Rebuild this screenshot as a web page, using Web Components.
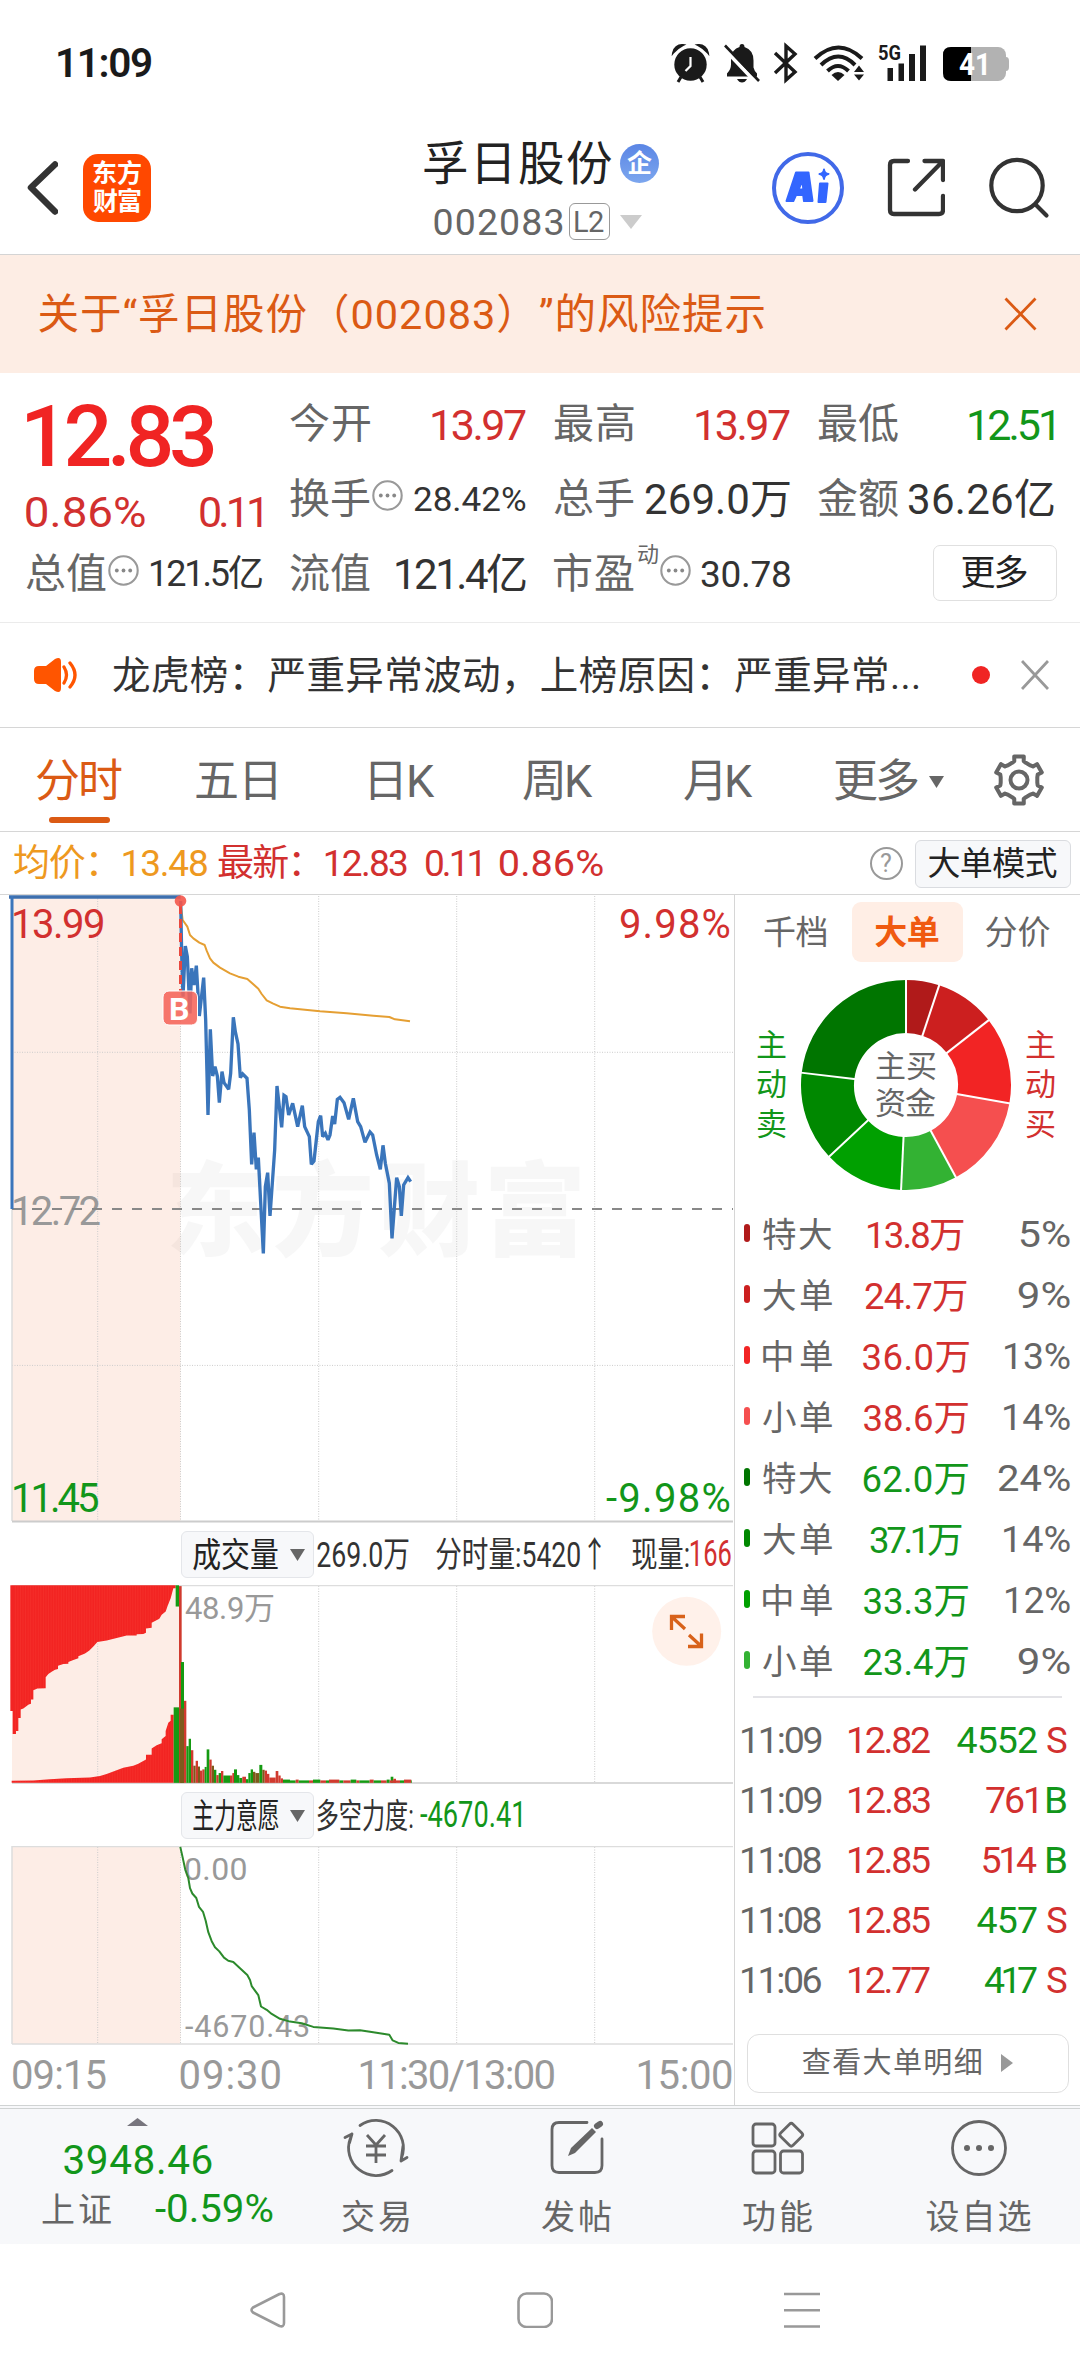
<!DOCTYPE html>
<html lang="zh-CN">
<head>
<meta charset="utf-8">
<title>孚日股份 002083</title>
<style>
html,body{margin:0;padding:0;background:#fff}
body{width:1080px;height:2376px;overflow:hidden;font-family:Roboto,"Noto Sans CJK SC",sans-serif}
</style>
</head>
<body>
<stock-app></stock-app>
<script>
const FONT='Roboto,"Noto Sans CJK SC",sans-serif';
const ctx=document.createElement('canvas').getContext('2d');
// Measures the inked extent of a string so that labels can be set to an exact width.
function ink(str,size,weight){
  ctx.font=`${weight} ${size}px ${FONT}`;
  const m=ctx.measureText(str);
  return {left:m.actualBoundingBoxLeft,width:m.actualBoundingBoxLeft+m.actualBoundingBoxRight};
}
const BASE=`*{box-sizing:border-box}svg{display:block;flex:none}.row{display:flex;align-items:center}.col{display:flex;flex-direction:column}`;
function define(name,css,html,after){
  const tpl=document.createElement('template');
  tpl.innerHTML=`<style>${BASE}${css}</style>${html}`;
  customElements.define(name,class extends HTMLElement{
    connectedCallback(){
      if(this.shadowRoot)return;
      this.attachShadow({mode:'open'}).append(tpl.content.cloneNode(true));
      if(after)after(this,this.shadowRoot);
    }
  });
}
// fit-text: s = font size, w = inked width, c = colour, b = weight, q = scale instead of tracking
customElements.define('fit-text',class extends HTMLElement{
  connectedCallback(){
    if(this.shadowRoot)return;
    const a=n=>this.getAttribute(n);
    const s=+a('s'),b=a('b')||400,str=this.textContent,k=ink(str,s,b),w=a('w')?+a('w'):k.width,n=[...str].length;
    let fit='';
    if(this.hasAttribute('q'))fit=`transform:scaleX(${w/k.width});transform-origin:${-k.left}px 0;`;
    else if(n>1)fit=`letter-spacing:${(w-k.width)/(n-1)}px;`;
    this.attachShadow({mode:'open'}).innerHTML=`<style>
      :host{display:flex;flex:none;width:${w}px;height:${.72*s}px;${a('c')?`color:${a('c')};`:''}font:${b} ${s}px ${FONT};line-height:${.72*s}px}
      span{display:block;white-space:nowrap;text-spacing-trim:space-all;margin:${.018*s}px 0 0 ${k.left}px;${fit}}</style><span><slot></slot></span>`;
  }
});
const T=(s,w,c,t,x='')=>`<fit-text s="${s}" w="${w}" c="${c}" ${x}>${t}</fit-text>`;
// Text label placed on a chart canvas by its inked left edge and baseline.
function label(x,y,w,s,c,t,b=400){
  const k=ink(t,s,b),n=[...t].length;
  return `<text x="${x+k.left}" y="${y}" fill="${c}" font-size="${s}" font-weight="${b}" style="letter-spacing:${n>1?(w-k.width)/(n-1):0}px">${t}</text>`;
}
const RED='#d2302f',GREEN='#12961a',ORANGE='#db5a14';

define('status-bar',`:host{display:flex;height:125px;padding:0 65px 0 58px;justify-content:space-between;align-items:center}`,
`${T(40.5,93,'#1a1a1a','11:09','b="600"')}
<svg width="345" height="45" viewBox="670 40 345 45" fill="#1a1a1a" stroke="none" font-family="Roboto">
 <circle cx="690.5" cy="64.5" r="16.2"/><path d="M673 53a9 9 0 0 1 10-8q-6 3-10 8zM708 53a9 9 0 0 0-10-8q6 3 10 8z" stroke="#1a1a1a" stroke-width="2"/><path d="M681 77l-3 5M700 77l3 5" stroke="#1a1a1a" stroke-width="3"/><path d="M690.500 57v9l-5 5" stroke="#fff" stroke-width="2.200" fill="none"/>
 <path d="M742 44q2.500 0 2.500 3q9 3 9 13.500v7q1 4 3.500 6v3h-30v-3q4-4 4-9v-7q1-8 8.500-10.500q0-3 2.500-3z"/><path d="M737 79h10q-2 3.500-5 3.500t-5-3.500z"/><path d="M722 46.500l35 37" stroke="#fff" stroke-width="4"/><path d="M725 45.500l34 35.500" stroke="#1a1a1a" stroke-width="2.600"/>
 <path d="M775 53l20 19-9 8V46l9 8-20 19" fill="none" stroke="#1a1a1a" stroke-width="3.400"/>
 <g fill="none" stroke="#1a1a1a" stroke-width="4"><path d="M815 58.500Q838.500 36.500 862 58.500"/><path d="M821 65Q838.500 48 855 65"/><path d="M827.500 71Q838 61 848.500 71"/></g><path d="M831.500 75q6.500-6 13 0l-6.500 6z"/><path d="M854 72l5-6.500 5 6.500zM854 74.500l5 6 5-6z"/>
 <text x="878" y="60" font-size="20" font-weight="700" textLength="23" lengthAdjust="spacingAndGlyphs">5G</text>
 <path d="M887.500 68h5.500v13h-5.500zM898.500 63.500h5.500V81h-5.500zM909 54h6v27h-6zM920 45.500h6V81h-6z"/>
 <rect x="943" y="47" width="63" height="34" rx="8" fill="#b2b2b2"/><path d="M1004 57h2q3 0 3 4v6q0 4-3 4h-2z" fill="#b2b2b2"/><path d="M951 47h20v34h-20q-8 0-8-8V55q0-8 8-8z" fill="#000"/>
 <text x="959" y="75" font-size="31" font-weight="700" fill="#fff" textLength="32" lengthAdjust="spacingAndGlyphs">41</text>
</svg>`);

define('app-header',`:host{display:flex;height:130px;border-bottom:1.500px solid #d4d4d4;padding:0 30px 0 27px;align-items:flex-start}
.left{gap:25px;margin-top:28.500px}.logo{width:68px;height:68px;border-radius:15px;background:#ff4800;display:flex;flex-direction:column;align-items:center;justify-content:center;gap:10.500px}
.mid{margin:22.500px 0 0 273px;align-items:flex-start}.t{gap:8px;height:32px}.badge{width:39px;height:39px;border-radius:50%;background:linear-gradient(#5b86e5,#7ca6ee);display:flex;align-items:center;justify-content:center}
.s{height:37px;margin:23.500px 0 0 10.500px}.l2{width:41px;height:37px;border:1.500px solid #999;border-radius:6px;margin:0 10px 0 6.500px;display:flex;align-items:center;justify-content:center}
.right{gap:43px;margin:26.500px 0 0 auto}`,
`<div class="row left"><svg width="31" height="56" viewBox="27 159 31 56"><path d="M55 164L31 187l24 24" transform="translate(0 -.5)" fill="none" stroke="#333" stroke-width="6.500" stroke-linecap="round" stroke-linejoin="round"/></svg>
<div class="logo">${T(25,48,'#fff','东方','b="700"')}${T(25,48,'#fff','财富','b="700"')}</div></div>
<div class="col mid"><div class="row t">${T(46.5,188,'#222','孚日股份')}<div class="badge">${T(25,25,'#fff','企','b="700"')}</div></div>
<div class="row s">${T(37.5,128,'#666','002083')}<div class="l2">${T(29,29,'#666','L2')}</div><svg width="22" height="14"><path d="M0 0h22L11 14z" fill="#ccc"/></svg></div></div>
<div class="row right"><svg width="72" height="72" viewBox="772 151.500 72 72"><circle cx="808" cy="187.500" r="34" fill="none" stroke="#4169e8" stroke-width="4"/><g fill="#3366ff" stroke="#3366ff" stroke-width="2" stroke-linejoin="round"><path fill-rule="evenodd" d="M796 172h12.500l4 28.500h-8.500l-.8-6h-7.200l-2.700 6h-6.800zM802.500 180l-4 9h4.800z"/><path d="M820 183h7.500l-2 18.500h-7z"/><path d="M824 169q.5 4 4.500 4.500-4 .5-4.500 5-.5-4.500-4.500-5 4-.5 4.500-4.500z"/></g></svg>
<svg width="58" height="60" viewBox="887 157.500 58 60" fill="none" stroke="#333" stroke-width="4.300" stroke-linecap="round" stroke-linejoin="round"><path d="M908 160.500h-14q-4 0-4 4v45q0 4 4 4h45q4 0 4-4v-14M924.500 160.500H943v19M942 161.500L915 189"/></svg>
<svg width="62" height="62" viewBox="990 156 62 62" fill="none" stroke="#333" stroke-width="4.200" stroke-linecap="round"><circle cx="1019" cy="184.500" r="25.700"/><path d="M1038 204l10.500 10.500"/></svg></div>`);

define('risk-banner',`:host{display:flex;height:118px;background:#fdede4;align-items:center;justify-content:space-between;padding:0 43px 0 38.500px}`,
`${T(41.5,726,ORANGE,'关于“孚日股份（002083）”的风险提示')}<svg width="34" height="34" viewBox="0 0 34 34"><path d="M2.500 1.500l30 31M32.500 1.500l-30 31" stroke="${ORANGE}" stroke-width="2.800"/></svg>`);

define('more-dot',`:host{display:block;flex:none;margin-bottom:8px}`,`<svg width="31" height="31" viewBox="-15.500 -15.500 31 31"><circle r="14.200" fill="none" stroke="#999" stroke-width="2.100"/><g fill="#888"><circle cx="-6.700" r="1.900"/><circle r="1.900"/><circle cx="6.700" r="1.900"/></g></svg>`);

define('quote-panel',`:host{display:grid;height:250px;border-bottom:1.500px solid #ebebeb;padding:14px 26px 0;grid-template-columns:repeat(4,236px);gap:28px}
.c>div{height:75px;display:flex;align-items:center;justify-content:space-between}.c>.big{height:100px;padding:0 0 4px 1px}.c>.sub{height:50px}.l{display:flex;align-items:center;gap:2px}
.btn{width:124px;height:56px;border:1.500px solid #e0e0e0;border-radius:7px;display:flex;align-items:center;justify-content:center;margin:-4px -2.500px 0 0}`,
`<div class="c"><div class="big">${T(86,187,'#f02423','12.83','b="500"')}</div><div class="sub">${T(43,119,RED,'0.86%','q')}${T(43,62,RED,'0.11')}</div><div><span class="l">${T(41,80,'#666','总值')}<more-dot></more-dot></span>${T(36,111,'#333','121.5亿')}</div></div>
<div class="c"><div>${T(41,80,'#666','今开')}${T(43,94,RED,'13.97')}</div><div><span class="l">${T(41,80,'#666','换手')}<more-dot></more-dot></span>${T(33.5,112,'#333','28.42%','q')}</div><div>${T(41,80,'#666','流值')}${T(42,130,'#333','121.4亿')}</div></div>
<div class="c"><div>${T(41,80,'#666','最高')}${T(43,94,RED,'13.97')}</div><div>${T(41,80,'#666','总手')}${T(42,145,'#333','269.0万')}</div><div><span class="l">${T(41,80,'#666','市盈')}<span style="margin:-40px 0 0 2px">${T(22,20,'#666','动')}</span><more-dot></more-dot></span>${T(37,89,'#333','30.78')}</div></div>
<div class="c"><div>${T(41,80,'#666','最低')}${T(43,85,GREEN,'12.51')}</div><div>${T(41,80,'#666','金额')}${T(42,146,'#333','36.26亿')}</div><div style="justify-content:flex-end"><div class="btn">${T(35,66,'#222','更多')}</div></div></div>`);

define('news-strip',`:host{display:flex;height:105px;border-bottom:1.500px solid #d6d6d6;padding:0 31px 0 33px;align-items:center}.dot{width:18px;height:18px;border-radius:50%;background:#f02423;margin:0 31px 0 53px}`,
`<svg width="46" height="38" viewBox="33 655 46 38"><path d="M39 665h7l9-7q6-3 6 3v26q0 6-6 3l-9-7h-7q-5 0-5-5v-8q0-5 5-5z" fill="#ff5500"/><path d="M64 666q5 8 0 16M70 662q10 12 0 24" fill="none" stroke="#ff5500" stroke-width="3.300" stroke-linecap="round"/></svg>
<span style="width:34px"></span>${T(38.5,806,'#333','龙虎榜：严重异常波动，上榜原因：严重异常...')}<div class="dot"></div><svg width="28" height="30"><path d="M1 1l26 28M27 1L1 29" stroke="#999" stroke-width="2.800"/></svg>`);

define('period-tabs',`:host{display:flex;height:104px;border-bottom:1.500px solid #d6d6d6;align-items:flex-start;padding:18px 35px 0 36px}
div{display:flex;align-items:center;height:71px}.on{flex-direction:column;height:77px;justify-content:space-between;padding-top:19.500px}.on i{width:61px;height:6px;border-radius:3px;background:${ORANGE}}`,
`<div class="on">${T(45,86,ORANGE,'分时')}<i></i></div><div style="margin-left:74px">${T(45,80,'#666','五日')}</div><div style="margin-left:94px">${T(45,65,'#666','日K')}</div><div style="margin-left:88px">${T(45,70,'#666','周K')}</div><div style="margin-left:91px">${T(45,69,'#666','月K')}</div><div style="margin-left:82px">${T(45,83,'#666','更多')}<svg width="15" height="12" style="margin-left:11px"><path d="M0 0h15L7.500 12z" fill="#666"/></svg></div><div style="margin-left:48px;height:68px"><svg id="gear" width="54" height="54" viewBox="-27 -27 54 54" fill="none" stroke="#666" stroke-width="4" stroke-linejoin="round"></svg></div>`,
(h,r)=>{
  const pts=[];
  for(let k=0;k<6;k++)for(const [d,q] of [[-22,18.5],[-14,19.5],[-11.5,24],[11.5,24],[14,19.5],[22,18.5]]){const t=(k*60-90+d)*Math.PI/180;pts.push((q*Math.cos(t)).toFixed(1)+','+(q*Math.sin(t)).toFixed(1));}
  r.getElementById('gear').innerHTML=`<polygon points="${pts.join(' ')}"/><circle r="8.500"/>`;
});

define('legend-bar',`:host{display:flex;height:63px;border-bottom:1.500px solid #d6d6d6;align-items:center;padding:1.500px 9.500px 0 14px}.sp{flex:1}
.help{width:33px;height:33px;border:2.500px solid #999;border-radius:50%;display:flex;align-items:center;justify-content:center;margin-right:12px}.btn{width:156px;height:48px;border:1.500px solid #dadce0;border-radius:6px;background:#f7f8fa;display:flex;align-items:center;justify-content:center}`,
`${T(37,193,'#ee991f','均价：13.48')}<span style="width:11px"></span>${T(37,189,RED,'最新：12.83')}<span style="width:19px"></span>${T(37,54.5,RED,'0.11')}<span style="width:19px"></span>${T(37,103,RED,'0.86%','q')}<span class="sp"></span><div class="help">${T(25,12,'#999','?')}</div><div class="btn">${T(33,128,'#222','大单模式')}</div>`);

const GRID=(y1,y2)=>`<path d="M97.700 ${y1}V${y2}M180.500 ${y1}V${y2}M318.700 ${y1}V${y2}M456.700 ${y1}V${y2}M594.700 ${y1}V${y2}" stroke="#ccc" stroke-width="1" stroke-dasharray="1 1.500" fill="none"/>`;

define('price-chart',`:host{display:block}text{font-family:${FONT}}`,`<svg width="734" height="628" viewBox="0 895 734 628"></svg>`,(h,r)=>{
  const avg='541,243 548,300 562,320 570,345 580,355 598,368 614,375 620,392 630,415 640,428 660,443 690,460 715,470 742,477 775,506 785,522 800,541 818,550 840,560 870,565 960,574 1040,580 1120,587 1168,591 1185,598 1230,604';
  const px='542,243 545,400 549,530 556,378 562,410 570,580 575,445 582,495 589,437 598,588 611,473 617,600 624,885 631,628 638,768 645,740 652,768 658,848 666,755 672,788 686,808 692,760 700,592 706,635 714,672 721,773 728,762 741,775 748,870 755,1033 762,938 769,1048 775,1013 790,1300 796,1100 803,1058 810,1188 824,990 831,798 845,922 852,826 858,830 866,885 878,850 893,920 907,857 914,920 928,950 934,1033 942,1023 955,905 962,887 968,950 976,940 984,960 990,945 998,888 1004,912 1012,838 1020,832 1032,848 1046,898 1060,835 1073,905 1082,920 1095,967 1110,936 1118,945 1130,1005 1141,1048 1149,976 1156,1030 1168,1090 1176,1255 1190,1073 1198,1100 1204,1188 1211,1095 1224,1073 1232,1085';
  r.querySelector('svg').innerHTML=`<rect x="12" y="896" width="168.500" height="625" fill="#fdede6"/>
  <g opacity=".027">${label(171,1248,409,102,'#000','东方财富',900)}</g>
  ${GRID(896,1521)}<path d="M12 1052.300H733M12 1365.400H733" stroke="#ccc" stroke-dasharray="1 1.500"/>
  <path d="M12 896V1521" stroke="#ddd" stroke-width="1.500"/><path d="M12 1521.500H733" stroke="#ccc" stroke-width="2"/>
  ${label(14,1225,85.5,40,'#999','12.72')}
  <path d="M12 1209H733" stroke="#888" stroke-width="2" stroke-dasharray="10 10"/>
  <g transform="translate(0 820) scale(.33333)" fill="none" stroke-linejoin="round"><polyline points="${avg}" stroke="#e59f33" stroke-width="6"/><polyline points="${px}" stroke="#3a75bb" stroke-width="10" stroke-linejoin="miter" stroke-miterlimit="2"/></g>
  <path d="M9 897H180.500" stroke="#3d6fae" stroke-width="3.500"/><path d="M12 896V1209" stroke="#3a75bb" stroke-width="3"/>
  ${label(14,938,89,40,RED,'13.99')}${label(620,938,109.5,40,RED,'9.98%')}${label(14,1512,84,40,GREEN,'11.45')}${label(606,1512,123.5,40,GREEN,'-9.98%')}
  <path d="M180.500 905V991" stroke="#e8483f" stroke-width="3" stroke-dasharray="9 5"/><circle cx="180.500" cy="901" r="5.800" fill="#f4564b" opacity=".9"/>
  <rect x="163" y="991" width="34.500" height="34" rx="6" fill="#f5645a" fill-opacity=".88" stroke="#fff" stroke-width="1"/>${label(171,1019.5,19.5,32,'#fff','B',700)}`;
});

define('indicator-bar',`:host{display:flex;align-items:center;height:62.500px;padding:1px 0 0 181px}
.pill{width:133px;height:47px;border:1.500px solid #e4e6ea;border-radius:6px;background:#f7f8fa;display:flex;align-items:center;justify-content:space-between;padding:0 8px 0 11px;margin-right:3px}`,
`<div class="pill"><slot name="name"></slot><svg width="15" height="12"><path d="M0 0h15L7.500 12z" fill="#666"/></svg></div><slot></slot>`);

define('volume-chart',`:host{display:block}text{font-family:${FONT}}`,`<svg width="734" height="199" viewBox="0 1585 734 199"></svg>`,(h,r)=>{
  const top='31,258 31,566 38,566 38,622 48,622 48,615 55,615 55,583 62,583 62,562 70,560 78,555 86,550 93,548 93,538 100,538 100,515 112,511 137,510 137,483 145,475 155,470 165,465 174,463 174,455 190,451 205,450 205,446 220,441 235,437 235,432 255,425 268,418 280,408 292,397 320,393 350,387 380,381 410,381 410,378 430,377 438,374 438,364 455,362 455,350 478,340 485,330 497,322 503,308 512,290 520,265 527,265 527,258';
  const bot='35,742 35,737 100,736 150,733 200,731 270,729 300,725 320,720 350,711 370,705 400,700 415,695 438,685 438,673 455,673 455,658 470,650 485,645 485,635 497,627 497,615 505,595 512,590 512,575 521,575 521,742';
  const R='#d03a2e',G='#159a12',O='#7d5a1b';
  const bars=[[521,537,557,G],[537,545,260,R],[543,552,446,G],[539,552,560,O],[552,559,541,R],[559,566,652,G],[566,573,634,G],[573,580,662,R],[580,587,700,O],[587,594,688,R],[594,600,702,O],[600,607,712,R],[607,614,709,R],[614,620,703,G],[620,628,660,G],[628,635,685,R],[635,642,700,O],[642,649,710,G],[649,656,723,R],[656,663,718,G],[663,670,713,R],[670,690,724,G],[690,697,724,R],[697,702,718,R],[702,711,709,G],[711,718,723,G],[718,727,730,G],[727,738,727,R],[738,745,733,G],[745,752,718,G],[752,759,709,G],[759,766,715,O],[766,778,718,O],[778,787,698,G],[787,794,710,O],[794,801,712,R],[801,808,720,R],[808,827,729,R],[827,835,713,R],[835,842,724,R],[842,849,731,R],[849,870,734,G],[1172,1180,727,G],[1180,1188,732,R]];
  for(let x=870,i=0;x<1235;i++){const w=[17,9,31,12,22][i%5];bars.push([x,Math.min(x+w,1236),i%3==1?734:736,i%2?R:G]);x+=w;}
  let sheen='';for(let x=46;x<515;x+=7.66)sheen+=`M${x} 258V742`;
  r.querySelector('svg').innerHTML=`<rect x="12" y="1585" width="168.500" height="198" fill="#fdede6"/>${GRID(1586,1783)}<path d="M12 1585.500H733" stroke="#ddd" stroke-width="1.500"/><path d="M12 1783H733" stroke="#ccc" stroke-width="1.500"/>
  <g transform="translate(0 1480) scale(.33333 .40816)"><clipPath id="c"><polygon points="${top}"/><polygon points="${bot}"/></clipPath><polygon points="${top}" fill="#f22423"/><polygon points="${bot}" fill="#f22423"/><path d="${sheen}" stroke="#ff5a4a" stroke-width="1" opacity=".5" clip-path="url(#c)"/><rect x="527" y="258" width="10" height="52" fill="${G}"/>
  ${bars.map(b=>`<rect x="${b[0]}" y="${b[2]}" width="${b[1]-b[0]}" height="${742-b[2]}" fill="${b[3]}"/>`).join('')}</g>
  ${label(185,1618.5,89,31,'#999','48.9万')}
  <circle cx="686.700" cy="1631.300" r="34.500" fill="#fff1ea"/><path d="M685 1616.500H671.500V1630M672 1617l13 12M688 1646.500H701.500V1633.500M701 1646l-12-11" fill="none" stroke="#d8621a" stroke-width="3.300"/>`;
});

define('power-chart',`:host{display:block}text{font-family:${FONT}}`,`<svg width="734" height="200" viewBox="0 1846 734 200"></svg>`,(h,r)=>{
  const c='541,899 548,925 556,955 565,975 570,1000 577,1013 589,1024 597,1046 609,1058 617,1080 625,1108 635,1130 645,1145 658,1155 672,1170 685,1178 700,1181 720,1196 742,1213 750,1225 755,1240 775,1262 783,1290 800,1298 815,1308 840,1320 870,1327 905,1331 940,1340 1000,1344 1045,1349 1080,1348 1110,1352 1168,1359 1178,1373 1195,1379 1224,1381'.split(' ').map(p=>{const [x,y]=p.split(',');return (x/3).toFixed(1)+','+(1480+y/2.45).toFixed(1)}).join(' ');
  r.querySelector('svg').innerHTML=`<rect x="12" y="1846" width="168.500" height="198" fill="#fdede6"/>${GRID(1847,2044)}<path d="M12 2044V1846.500H733M12 2044H733" fill="none" stroke="#ddd" stroke-width="1.500"/>
  ${label(185,1880,61.5,32,'#999','0.00')}${label(185,2036.5,124,30.5,'#999','-4670.43')}<polyline points="${c}" fill="none" stroke="#2c8a2c" stroke-width="2" stroke-linejoin="round"/>`;
});

define('time-axis',`:host{display:flex;height:59px;align-items:center;padding:1px 1px 0 13px}`,
`${T(40,92.5,'#999','09:15')}<span style="width:75px"></span>${T(40,100,'#999','09:30')}<span style="width:80px"></span>${T(40,194,'#999','11:30/13:00')}<span style="width:84px"></span>${T(40,93.5,'#999','15:00')}`);

define('chart-column',`:host{display:flex;flex-direction:column;width:734px;height:1210px}`,
`<price-chart></price-chart>
<indicator-bar>${T(34,85,'#222','成交量','q slot="name"')}${T(35,91.5,'#333','269.0万','q')}<span style="width:27px"></span>${T(35,165,'#333','分时量:5420↑','q')}<span style="width:31px"></span>${T(35,57,'#333','现量:','q')}<span style="width:2px"></span>${T(36,40,RED,'166','q')}</indicator-bar>
<volume-chart></volume-chart>
<indicator-bar>${T(34,86,'#222','主力意愿','q slot="name"')}${T(34,96,'#333','多空力度:','q')}<span style="width:7px"></span>${T(36,101,GREEN,'-4670.41','q')}</indicator-bar>
<power-chart></power-chart><time-axis></time-axis>`);

define('fund-donut',`:host{display:flex;height:212px;margin-top:17px;padding:0 25px 0 22px;align-items:center;justify-content:space-between}
.v{height:110px;display:flex;flex-direction:column;justify-content:space-between;padding:4px 0}.ring{display:grid;place-items:center}.ring>*{grid-area:1/1}.in{gap:15px}`,
`<div class="v">${T(31,29,GREEN,'主')}${T(31,29,GREEN,'动')}${T(31,29,GREEN,'卖')}</div><div class="ring"><svg id="d" width="212" height="212" viewBox="-106 -106 212 212"></svg><div class="col in">${T(31,60,'#666','主买')}${T(31,60,'#666','资金')}</div></div><div class="v">${T(31,29,RED,'主')}${T(31,29,RED,'动')}${T(31,29,RED,'买')}</div>`,
(h,r)=>{
  const a=[0,18.4,51.9,100.1,151.6,182.7,227,276.7,360],c=['#b01a1a','#cc1f1f','#f22424','#f54f4f','#33b233','#00a000','#008800','#007500'];
  const P=(d,q)=>{const t=(d-90)*Math.PI/180;return (q*Math.cos(t)).toFixed(2)+' '+(q*Math.sin(t)).toFixed(2)};
  r.getElementById('d').innerHTML=c.map((f,i)=>`<path d="M${P(a[i],105)}A105 105 0 0 1 ${P(a[i+1],105)}L${P(a[i+1],52)}A52 52 0 0 0 ${P(a[i],52)}z" fill="${f}"/>`).join('')+a.slice(1).map(d=>`<path d="M${P(d,50)}L${P(d,106)}" stroke="#fff" stroke-width="2"/>`).join('');
});

const ORDERS=[['特大','13.8万',96,'5%',50,'#b01a1a'],['大单','24.7万',102,'9%',52,'#cc1f1f'],['中单','36.0万',107,'13%',65,'#f22424'],['小单','38.6万',105,'14%',66,'#f54f4f'],['特大','62.0万',105,'24%',72,'#007500'],['大单','37.1万',92,'14%',66,'#008800'],['中单','33.3万',105,'12%',64,'#00a000'],['小单','23.4万',105,'9%',52,'#33b233']];
define('order-list',`:host{display:block;padding:0 10px 0 9px;margin-top:13.500px}.r{display:grid;grid-template-columns:19px 88px 130px 1fr;height:61px;align-items:center}.r i{width:6px;height:18px;border-radius:3px;margin-bottom:4px}.m{justify-self:center}.e{justify-self:end}`,
ORDERS.map((o,i)=>`<div class="r"><i style="background:${o[5]}"></i>${T(34.5,69,'#666',o[0])}<span class="m">${T(36.5,o[2],i<4?RED:GREEN,o[1])}</span><span class="e">${T(37,o[4],'#666',o[3],'q')}</span></div>`).join(''));

const TRADES=[['11:09','12.82',80.5,'4552','S'],['11:09','12.83',51,'761','B'],['11:08','12.85',54.5,'514','B'],['11:08','12.85',60.5,'457','S'],['11:06','12.77',53,'417','S']];
define('trade-list',`:host{display:block;border-top:2px solid #e3e3e7;margin:3px 18px 0;padding-top:12.500px}.r{display:grid;grid-template-columns:107px 81px 107px 1fr;height:60px;align-items:center;margin:0 -4px 0 -11px}.e{justify-self:end}`,
TRADES.map(t=>{const s=t[4]=='S';return `<div class="r">${T(37.5,79.5,'#666',t[0])}${T(37.5,81,RED,t[1])}<span class="e">${T(37.5,t[2],s?GREEN:RED,t[3])}</span><span class="e">${T(37.5,19.5,s?RED:GREEN,t[4],'q')}</span></div>`}).join(''));

define('side-panel',`:host{display:flex;flex-direction:column;width:346px;height:1210px;border-left:1.500px solid #d6d6d6}
.tabs{display:flex;margin:7px 28px 0 29px;height:60px;align-items:center}.on{width:111px;height:60px;border-radius:9px;background:#ffeee5;display:flex;align-items:center;justify-content:center;margin:0 23px 0 25px}
.btn{display:flex;align-items:center;justify-content:center;gap:20px;height:59px;border:1.500px solid #dfdfdf;border-radius:12px;margin:23.500px 11.500px 0 12px}`,
`<div class="tabs">${T(33,62.5,'#666','千档')}<div class="on">${T(33,63.5,'#f05a10','大单','b="700"')}</div>${T(33,64,'#666','分价')}</div>
<fund-donut></fund-donut><order-list></order-list><trade-list></trade-list>
<div class="btn">${T(29,178,'#666','查看大单明细')}<svg width="12" height="18"><path d="M0 0l12 9L0 18z" fill="#999"/></svg></div>`);

define('bottom-bar',`:host{display:flex;height:139px;background:#f7f8fa;border-top:1.500px solid #d0d3d3;margin-top:-1px}
.in{display:flex;flex:1;border-top:1.500px solid #d0d3d3;margin-top:1.500px;align-items:flex-start}.ix{width:275px;align-items:center;padding:9px 0 0}.it{width:201px;align-items:center;padding-top:9px}.it svg{margin-bottom:26.500px}svg{overflow:visible}`,
`<div class="in"><div class="col ix"><svg width="21" height="8"><path d="M0 8L10.500 0 21 8z" fill="#77757d"/></svg><div style="height:20px"></div>${T(40.5,148,GREEN,'3948.46')}<div class="row" style="gap:44px;margin:21px 0 0 40px">${T(34,69,'#666','上证')}${T(38,118,GREEN,'-0.59%','q')}</div></div>
<div class="col it"><svg width="60" height="60" viewBox="-30 -30 60 60" fill="none" stroke="#666" stroke-width="2.800" stroke-linecap="round" stroke-linejoin="round"><path d="M-16-22.500A27.500 27.500 0 0 1 25.500 10M25 13l6-3.500M25 13l2-15"/><path d="M16 22.500A27.500 27.500 0 0 1-25.500-10M-24-14l-7 3.500M-24-14l-2.500 9"/><path d="M-9-13L0-3 9-13M0-3V15M-10-2H10M-10 7H10" stroke-linecap="butt"/></svg>${T(34,67,'#666','交易')}</div>
<div class="col it"><svg width="60" height="60" viewBox="-30 -30 60 60" fill="none" stroke="#666" stroke-width="2.800" stroke-linecap="round"><path d="M10-25.500H-18q-7 0-7 7v36q0 7 7 7h36q7 0 7-7V-9"/><path d="M-9 8l3-8L15-20l4 4L-2 5z" fill="#666" stroke="none"/><path d="M20-22l3-2" stroke-width="6"/></svg>${T(34,69,'#666','发帖')}</div>
<div class="col it"><svg width="60" height="60" viewBox="-30 -30 60 60" fill="none" stroke="#666" stroke-width="2.800" stroke-linejoin="round"><rect x="-25" y="-24" width="22" height="22" rx="3"/><rect x="-25" y="3" width="22" height="22" rx="3"/><rect x="2.500" y="3" width="22" height="22" rx="3"/><rect x="4.500" y="-22" width="17.500" height="17.500" rx="2.500" transform="rotate(45 13.250 -13.250)"/></svg>${T(34,69,'#666','功能')}</div>
<div class="col it"><svg width="60" height="60" viewBox="-30 -30 60 60"><circle r="26.500" fill="none" stroke="#666" stroke-width="2.800"/><g fill="#666"><circle cx="-12" r="3"/><circle r="3"/><circle cx="12" r="3"/></g></svg>${T(34,104,'#666','设自选')}</div></div>`);

define('nav-bar',`:host{display:flex;height:132px;justify-content:space-between;align-items:center;padding:0 260px 0 250px}`,
`<svg width="36" height="36" fill="none" stroke="#999" stroke-width="2.600" stroke-linejoin="round"><path d="M3 15.500L29.500 2q4.500-1.500 4.500 3v26q0 4.500-4.500 3L3 20.500q-3-2.500 0-5z"/></svg>
<svg width="36" height="36"><rect x="1.500" y="1.500" width="33.500" height="33.500" rx="8" fill="none" stroke="#999" stroke-width="2.600"/></svg>
<svg width="36" height="36"><path d="M0 2H36M0 18.200H36M0 34.500H36" stroke="#999" stroke-width="2.600"/></svg>`);

define('stock-app',`:host{display:flex;flex-direction:column;width:1080px;height:2376px;background:#fff;font-family:${FONT}}.main{display:flex;height:1211px;border-bottom:1.500px solid #d0d3d3}`,
`<status-bar></status-bar><app-header></app-header><risk-banner></risk-banner><quote-panel></quote-panel><news-strip></news-strip><period-tabs></period-tabs><legend-bar></legend-bar>
<div class="main"><chart-column></chart-column><side-panel></side-panel></div><bottom-bar></bottom-bar><nav-bar></nav-bar>`);
</script>
</body>
</html>
